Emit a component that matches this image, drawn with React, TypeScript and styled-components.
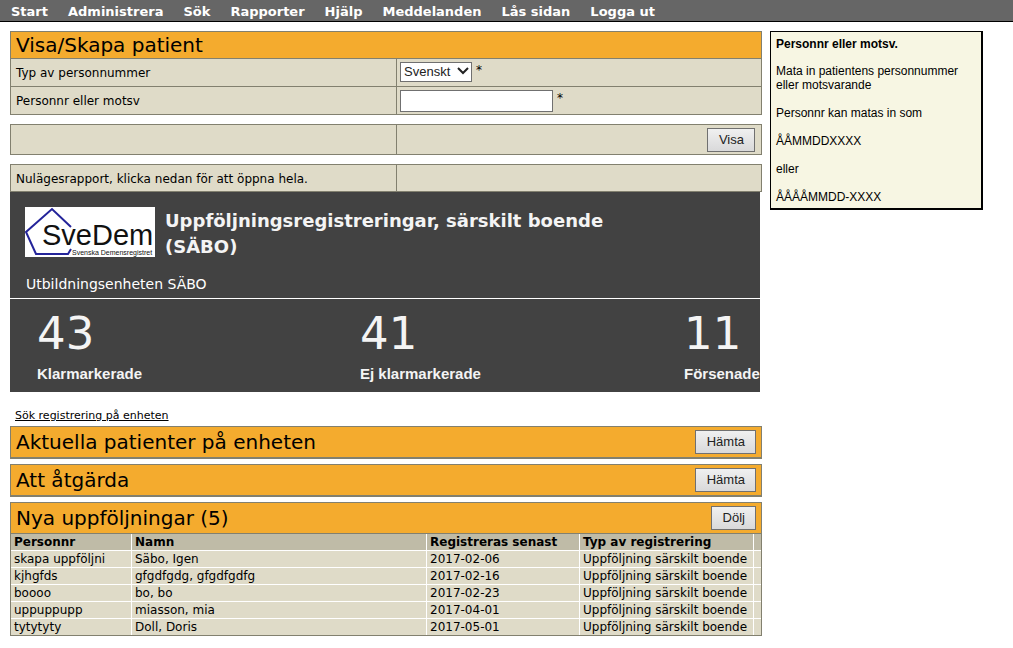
import React from "react";
import styled, { createGlobalStyle } from "styled-components";

const line = "#82806f";
const sand = "#dfdbc8";
const amber = "#f4ab2e";
const sans = `"Liberation Sans", Arial, sans-serif`;
const wide = `Verdana, "DejaVu Sans", sans-serif`;

const GlobalStyle = createGlobalStyle`
  *, *::before, *::after { box-sizing: border-box; }
  body { margin: 0; background: #fff; color: #000; font: 12px/16px ${wide}; }
  h1, h2, h3, p, dl, dd { margin: 0; }
`;

const NavBar = styled.nav`
  display: flex;
  gap: 20px;
  height: 22px;
  padding: 0 11px;
  background: #666;
  border-bottom: 1px solid #000;
`;

const NavLink = styled.a`
  color: #fff;
  font-size: 13px;
  font-weight: bold;
  line-height: 24px;
  text-decoration: none;
  white-space: nowrap;
`;

const Page = styled.div`
  display: grid;
  grid-template-columns: minmax(0, 1fr) 213px;
  align-items: start;
  gap: 8px;
  padding: 9px 30px 12px 10px;
`;

const Panel = styled.section<{ $gap?: number; $heavy?: boolean }>`
  margin-bottom: ${(p) => p.$gap ?? 0}px;
  border: 1px solid ${line};
  border-bottom-width: ${(p) => (p.$heavy ? 2 : 1)}px;
  background: ${sand};
`;

const PanelHead = styled.header<{ $tall?: boolean }>`
  display: flex;
  align-items: center;
  justify-content: space-between;
  height: ${(p) => (p.$tall ? 30 : 26)}px;
  padding: 0 5px;
  background: ${amber};
`;

const PanelTitle = styled.h2`
  font-size: 20px;
  font-weight: normal;
  line-height: 26px;
`;

const Row = styled.div<{ $tall?: boolean; $ruled?: boolean }>`
  display: grid;
  grid-template-columns: 385fr 365fr;
  height: ${(p) => (p.$tall ? 29 : p.$ruled ? 28 : 26)}px;
  border-top: ${(p) => (p.$ruled ? `1px solid ${line}` : "0")};
`;

const Cell = styled.div<{ $end?: boolean }>`
  display: flex;
  align-items: flex-start;
  justify-content: ${(p) => (p.$end ? "flex-end" : "flex-start")};
  gap: 4px;
  padding: 6px 5px 0;

  & + & {
    padding: 3px ${(p) => (p.$end ? 6 : 3)}px 0 3px;
    border-left: 1px solid ${line};
  }
`;

const Select = styled.select`
  width: 72px;
  height: 20px;
  padding: 0 18px 0 3px;
  appearance: none;
  border: 1px solid #707070;
  border-radius: 0;
  background: #fff;
  color: #222;
  font: 13px/18px ${sans};
`;

const SelectBox = styled.span`
  position: relative;
  display: flex;

  svg {
    position: absolute;
    top: 5px;
    right: 3px;
    pointer-events: none;
  }
`;

const TextBox = styled.input`
  width: 153px;
  height: 22px;
  padding: 0 4px;
  border: 1px solid #707070;
  border-radius: 0;
  background: #fff;
  font: 13px/18px ${sans};
`;

const Button = styled.button`
  height: 24px;
  padding: 0 10px 0 11px;
  border: 1px solid #707070;
  border-radius: 0;
  background: linear-gradient(#f0f0f0, #d9d9da);
  color: #222;
  font: 13px/20px ${sans};
`;

const Report = styled.a`
  display: block;
  margin-right: 2px;
  overflow: hidden;
  background: #424242;
  color: #f4f4f4;
  text-decoration: none;
`;

const ReportHead = styled.div`
  display: flex;
  align-items: flex-start;
  gap: 10px;
  padding: 15px 15px 0;
`;

const ReportTitle = styled.h3`
  max-width: 460px;
  padding-top: 1px;
  font-size: 18px;
  line-height: 26px;
`;

const Unit = styled.p`
  padding: 14px 16px 4px;
  border-bottom: 1px solid #fff;
  color: #fff;
  font-size: 14px;
  line-height: 20px;
`;

const Stats = styled.dl`
  display: grid;
  grid-template-columns: 323fr 324fr 76fr;
  padding: 6px 0 6px 27px;
`;

const Stat = styled.div`
  display: flex;
  flex-direction: column-reverse;
`;

const StatLabel = styled.dt`
  font: bold 15px/24px ${sans};
  white-space: nowrap;
`;

const StatValue = styled.dd`
  font-size: 45px;
  line-height: 57px;
`;

const SearchLink = styled.a`
  display: block;
  padding: 17px 5px 3px;
  color: #000;
  font-size: 11px;
  line-height: 14px;
`;

const Table = styled.table`
  width: 100%;
  border-collapse: separate;
  border-spacing: 0;
  border-top: 1px solid ${line};
  table-layout: fixed;
`;

const cellBase = `
  height: 17px;
  padding: 0 3px;
  border-right: 1px solid #fff;
  border-bottom: 1px solid #fff;
  line-height: 16px;
  text-align: left;
  white-space: nowrap;

  &:last-child { border-right: 0; }
`;

const Th = styled.th`
  ${cellBase}
  background: #bfbba7;
`;

const Td = styled.td`
  ${cellBase}

  tr:last-child > & {
    height: 16px;
    border-bottom: 0;
  }
`;

const Col = styled.col<{ $w?: number }>`
  width: ${(p) => (p.$w ? `${p.$w}px` : "auto")};
`;

const Help = styled.aside`
  padding: 5px 5px 4px;
  border: solid #000;
  border-width: 1px 2px 2px 1px;
  background: #f7f6e3;
  font: 12px/14px ${sans};

  h3 { margin-bottom: 13px; font-size: 12px; }
  p { margin-bottom: 14px; }
  p:last-child { margin-bottom: 0; }
`;

const Logo = () => (
  <svg width="130" height="50" viewBox="0 0 130 50" role="img" aria-label="SveDem">
    <rect width="130" height="50" fill="#fff" />
    <path d="M46 20 27 2 1 25l10 22h32l3-5" fill="none" stroke="#24249a" strokeWidth="2" />
    <text x="17" y="38" fontFamily="Liberation Sans, Arial" fontSize="29" fill="#111">
      SveDem
    </text>
    <text x="47" y="48" fontFamily="Liberation Sans, Arial" fontSize="7" fill="#111">
      Svenska Demensregistret
    </text>
  </svg>
);

const menu = ["Start", "Administrera", "Sök", "Rapporter", "Hjälp", "Meddelanden", "Lås sidan", "Logga ut"];

const stats = [
  { value: 43, label: "Klarmarkerade" },
  { value: 41, label: "Ej klarmarkerade" },
  { value: 11, label: "Försenade" },
];

const followUps = [
  ["skapa uppföljni", "Säbo, Igen", "2017-02-06"],
  ["kjhgfds", "gfgdfgdg, gfgdfgdfg", "2017-02-16"],
  ["boooo", "bo, bo", "2017-02-23"],
  ["uppuppupp", "miasson, mia", "2017-04-01"],
  ["tytytyty", "Doll, Doris", "2017-05-01"],
];

export default function App() {
  return (
    <>
      <GlobalStyle />
      <NavBar>
        {menu.map((item) => (
          <NavLink key={item} href="#">{item}</NavLink>
        ))}
      </NavBar>
      <Page>
        <main>
          <Panel $gap={9}>
            <PanelHead>
              <PanelTitle>Visa/Skapa patient</PanelTitle>
            </PanelHead>
            <Row $ruled>
              <Cell>
                <label htmlFor="type">Typ av personnummer</label>
              </Cell>
              <Cell>
                <SelectBox>
                  <Select id="type">
                    <option>Svenskt</option>
                  </Select>
                  <svg width="12" height="8" viewBox="0 0 12 8">
                    <path d="m1 1 5 5 5-5" fill="none" stroke="#222" strokeWidth="2" />
                  </svg>
                </SelectBox>
                *
              </Cell>
            </Row>
            <Row $ruled>
              <Cell>
                <label htmlFor="pnr">Personnr eller motsv</label>
              </Cell>
              <Cell>
                <TextBox id="pnr" type="text" />*
              </Cell>
            </Row>
          </Panel>

          <Panel $gap={9}>
            <Row $tall>
              <Cell />
              <Cell $end>
                <Button type="button">Visa</Button>
              </Cell>
            </Row>
          </Panel>

          <Panel>
            <Row>
              <Cell>Nulägesrapport, klicka nedan för att öppna hela.</Cell>
              <Cell />
            </Row>
          </Panel>

          <Report href="#">
            <ReportHead>
              <Logo />
              <ReportTitle>Uppföljningsregistreringar, särskilt boende (SÄBO)</ReportTitle>
            </ReportHead>
            <Unit>Utbildningsenheten SÄBO</Unit>
            <Stats>
              {stats.map((s) => (
                <Stat key={s.label}>
                  <StatLabel>{s.label}</StatLabel>
                  <StatValue>{s.value}</StatValue>
                </Stat>
              ))}
            </Stats>
          </Report>

          <SearchLink href="#">Sök registrering på enheten</SearchLink>

          <Panel $gap={5} $heavy>
            <PanelHead $tall>
              <PanelTitle>Aktuella patienter på enheten</PanelTitle>
              <Button type="button">Hämta</Button>
            </PanelHead>
          </Panel>

          <Panel $gap={5} $heavy>
            <PanelHead $tall>
              <PanelTitle>Att åtgärda</PanelTitle>
              <Button type="button">Hämta</Button>
            </PanelHead>
          </Panel>

          <Panel>
            <PanelHead $tall>
              <PanelTitle>Nya uppföljningar (5)</PanelTitle>
              <Button type="button">Dölj</Button>
            </PanelHead>
            <Table>
              <colgroup>
                <Col $w={121} />
                <Col />
                <Col $w={153} />
                <Col $w={174} />
                <Col $w={7} />
              </colgroup>
              <thead>
                <tr>
                  <Th>Personnr</Th>
                  <Th>Namn</Th>
                  <Th>Registreras senast</Th>
                  <Th>Typ av registrering</Th>
                  <Th />
                </tr>
              </thead>
              <tbody>
                {followUps.map(([id, name, due]) => (
                  <tr key={id}>
                    <Td>{id}</Td>
                    <Td>{name}</Td>
                    <Td>{due}</Td>
                    <Td>Uppföljning särskilt boende</Td>
                    <Td />
                  </tr>
                ))}
              </tbody>
            </Table>
          </Panel>
        </main>

        <Help>
          <h3>Personnr eller motsv.</h3>
          <p>Mata in patientens personnummer eller motsvarande</p>
          <p>Personnr kan matas in som</p>
          <p>ÅÅMMDDXXXX</p>
          <p>eller</p>
          <p>ÅÅÅÅMMDD-XXXX</p>
        </Help>
      </Page>
    </>
  );
}
